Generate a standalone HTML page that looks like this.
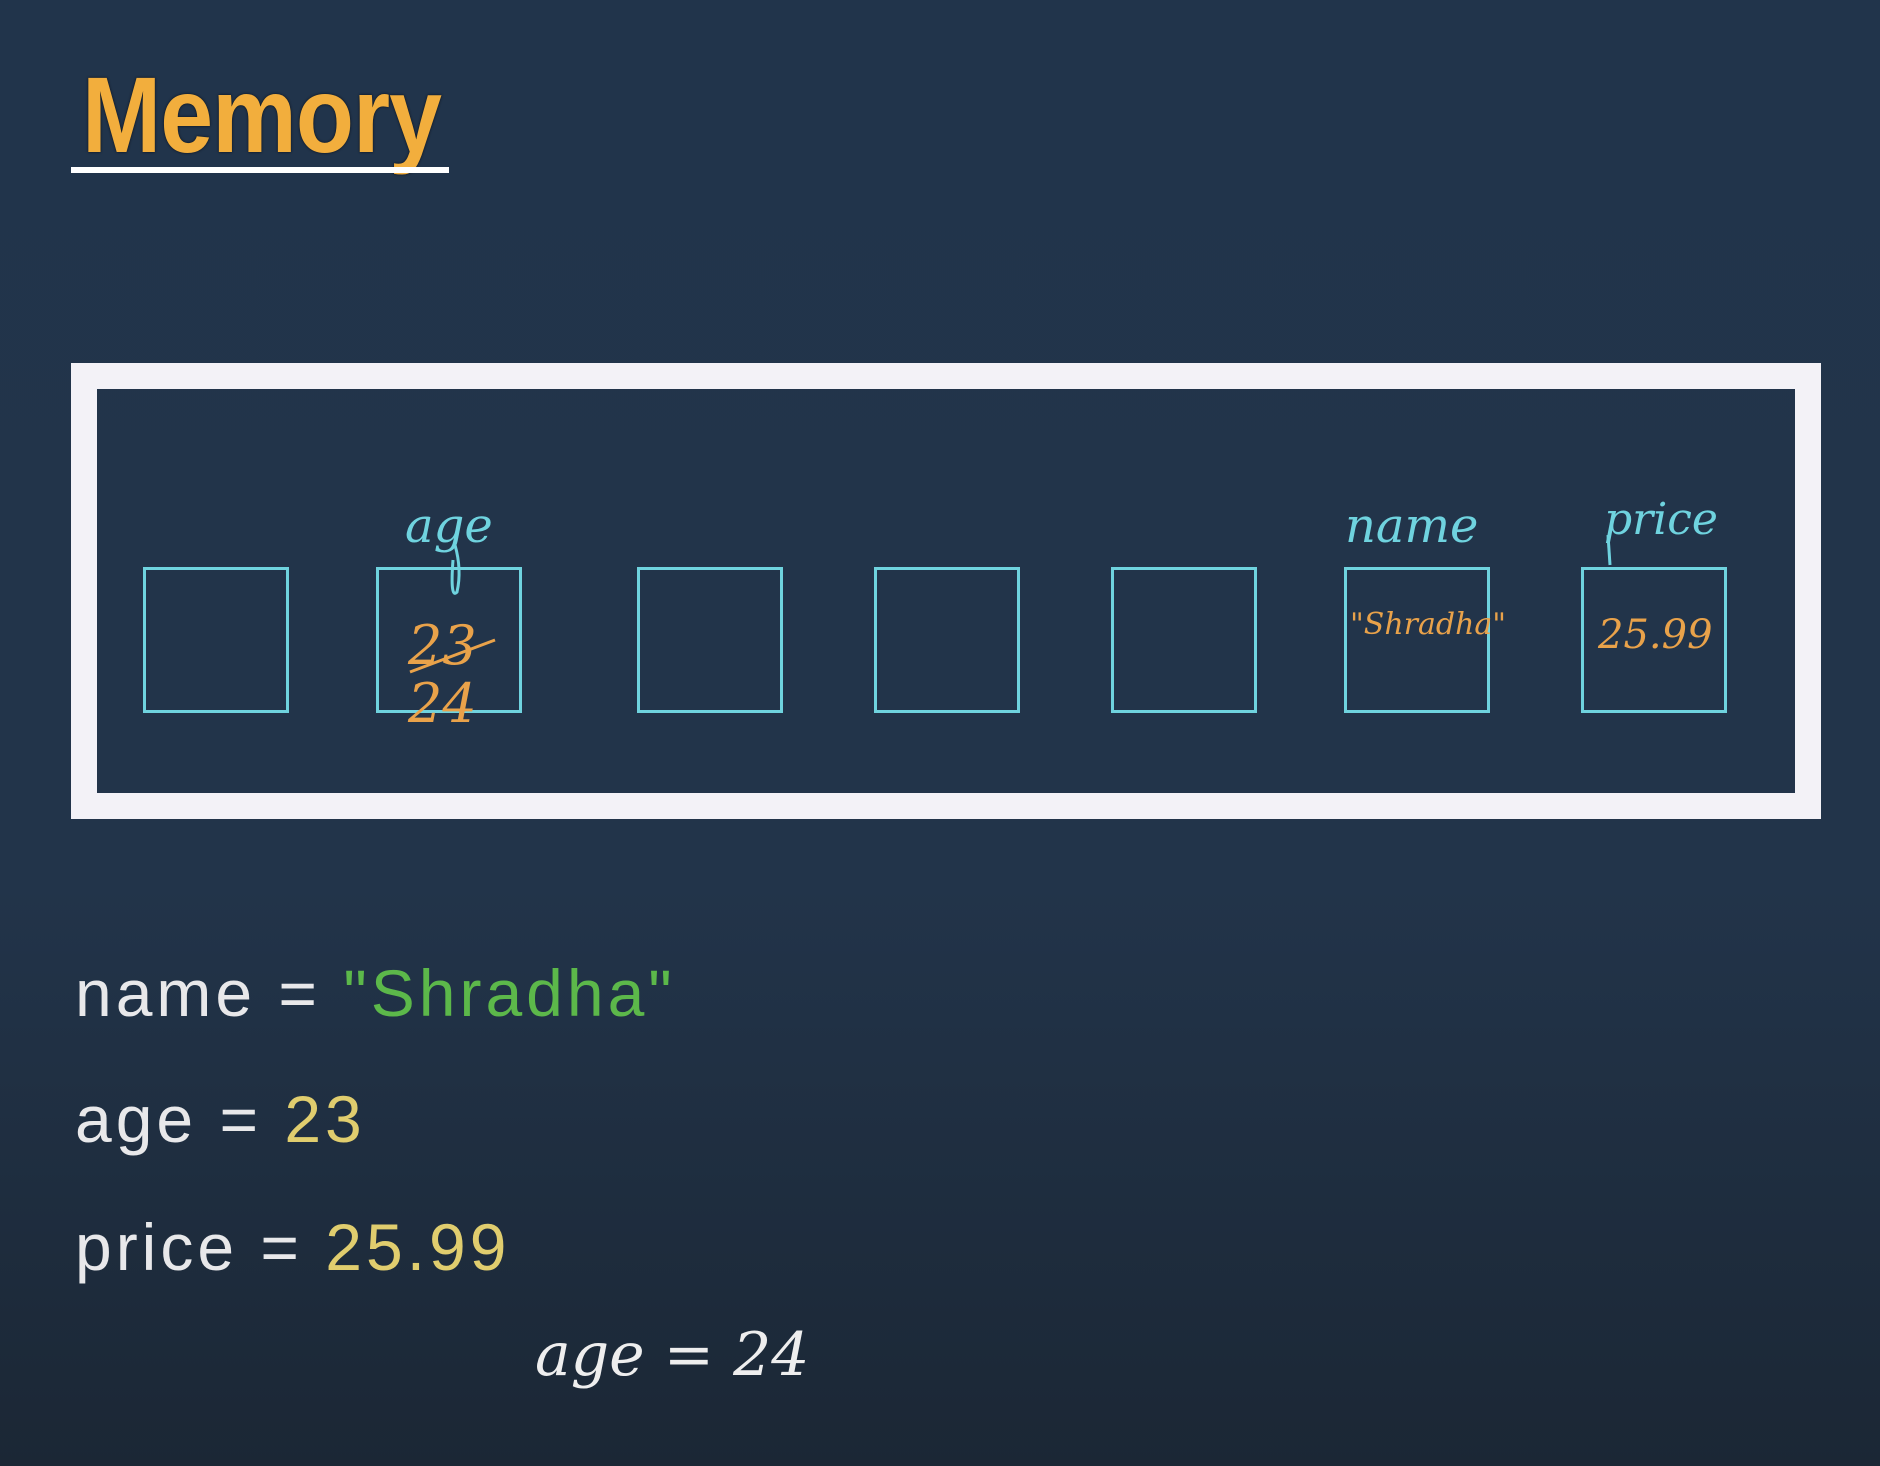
<!DOCTYPE html>
<html><head><style>
html,body{margin:0;padding:0}
body{width:1880px;height:1466px;overflow:hidden;background:linear-gradient(180deg,#21344b 0%,#22344a 60%,#1b2735 100%);position:relative;font-family:"Liberation Sans",sans-serif}
.title{position:absolute;left:82px;top:52px;font-size:108px;font-weight:bold;color:#f2ae3d;letter-spacing:-1px;transform:scaleX(0.88);transform-origin:left top;text-shadow:0 0 3px #0b0f18}
.ul{position:absolute;left:71px;top:167px;width:378px;height:6px;background:#fff}
.frame{position:absolute;left:71px;top:363px;width:1698px;height:404px;border:26px solid #f3f2f7}
.box{position:absolute;top:567px;width:140px;height:140px;border:3px solid #6fd3df}
.code{position:absolute;left:75px;font-size:66px;color:#e8e8ea;letter-spacing:4px}
.g{color:#5cb84a}.y{color:#e0cd6e}
.hw{position:absolute;font-family:"DejaVu Serif",serif;font-style:italic}
</style></head><body>
<div class="title">Memory</div>
<div class="ul"></div>
<div class="frame"></div>
<div class="box" style="left:143px"></div>
<div class="box" style="left:376px"></div>
<div class="box" style="left:637px"></div>
<div class="box" style="left:874px"></div>
<div class="box" style="left:1111px"></div>
<div class="box" style="left:1344px"></div>
<div class="box" style="left:1581px"></div>
<div class="hw" style="left:405px;top:498px;font-size:48px;color:#6fd3df">age</div>
<div class="hw" style="left:1345px;top:498px;font-size:48px;color:#6fd3df">name</div>
<div class="hw" style="left:1604px;top:494px;font-size:44px;color:#6fd3df">price</div>
<svg style="position:absolute;left:0;top:0" width="1880" height="1466"><path d="M1608 535 L1610 565" stroke="#6fd3df" stroke-width="3" fill="none"/><path d="M453 560 Q450 600 457 592 Q462 570 455 545" stroke="#6fd3df" stroke-width="3" fill="none"/><path d="M410 672 L495 640" stroke="#e9a24a" stroke-width="3"/></svg>
<div class="hw" style="left:408px;top:614px;font-size:54px;color:#e9a24a">23</div>
<div class="hw" style="left:408px;top:672px;font-size:54px;color:#e9a24a">24</div>
<div class="hw" style="left:1350px;top:607px;font-size:30px;color:#e9a24a">"Shradha"</div>
<div class="hw" style="left:1598px;top:612px;font-size:40px;color:#e9a24a">25.99</div>
<div class="code" style="top:955px">name = <span class="g">"Shradha"</span></div>
<div class="code" style="top:1081px">age = <span class="y">23</span></div>
<div class="code" style="top:1209px">price = <span class="y">25.99</span></div>
<div class="hw" style="left:535px;top:1320px;font-size:60px;color:#eee">age = 24</div>
</body></html>
